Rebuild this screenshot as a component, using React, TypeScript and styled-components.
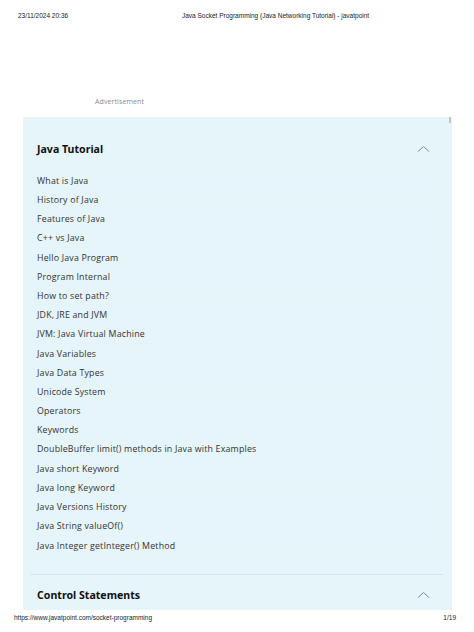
import React from "react";
import styled, { createGlobalStyle } from "styled-components";

const Global = createGlobalStyle`
  html, body { margin: 0; padding: 0; background: #ffffff; }
  body { width: 474px; height: 632px; overflow: hidden; }
`;

const Page = styled.div`
  width: 474px;
  height: 632px;
  display: flex;
  flex-direction: column;
  overflow: hidden;
  font-family: "Liberation Sans", Arial, sans-serif;
`;

const PrintHeader = styled.div`
  height: 30px;
  flex: none;
  display: grid;
  grid-template-columns: 164px auto;
  align-items: center;
  padding-left: 18px;
  font-size: 6.5px;
  color: #222;
`;

const Content = styled.div`
  flex: 1;
  min-height: 0;
  overflow: hidden;
  display: flex;
  flex-direction: column;
`;

const AdArea = styled.div`
  height: 87px;
  flex: none;
  display: flex;
  align-items: flex-end;
  padding: 0 0 10px 95px;
  box-sizing: border-box;
`;

const AdLabel = styled.span`
  font-family: "Open Sans", sans-serif;
  font-size: 7px;
  letter-spacing: 0.1px;
  color: #8a8a8a;
  line-height: 10px;
`;

const Panel = styled.div`
  position: relative;
  margin: 0 22px 0 23px;
  padding-top: 12px;
  background: #e6f5fa;
  flex: 1;
  min-height: 0;
  overflow: hidden;
`;

const ScrollThumb = styled.div`
  position: absolute;
  top: 0;
  right: 1px;
  width: 2px;
  height: 6px;
  background: #b9c4c8;
`;

const Section = styled.div<{ $divided?: boolean }>`
  margin: 0 9px 0 7px;
  border-top: ${(p) => (p.$divided ? "1px solid #d3e5eb" : "none")};
`;

const SectionHeader = styled.div`
  height: 40px;
  display: flex;
  align-items: center;
  justify-content: space-between;
  padding: 0 13px 0 7px;
`;

const SectionTitle = styled.span`
  font-family: "Noto Sans", sans-serif;
  font-weight: 700;
  font-size: 10.6px;
  color: #111;
`;

const List = styled.ul`
  list-style: none;
  margin: 0 19px 0 7px;
  padding: 2px 0 19px 0;
`;

const Item = styled.li`
  height: 19.2px;
  display: flex;
  align-items: center;
  box-sizing: border-box;
  padding-top: 1.5px;
  border-bottom: 1px solid #e2f3f9;
  font-family: "Open Sans", sans-serif;
  font-size: 8.8px;
  letter-spacing: 0.2px;
  color: #333;
  &:last-child { border-bottom: none; }
`;

const PrintFooter = styled.div`
  height: 22px;
  flex: none;
  display: flex;
  justify-content: space-between;
  align-items: flex-start;
  padding: 4px 18px 0 14px;
  box-sizing: border-box;
  font-size: 6.5px;
  color: #222;
`;

const Chevron = () => (
  <svg width="13" height="8" viewBox="0 0 13 8" fill="none">
    <path d="M1 6.5 L6.5 1.5 L12 6.5" stroke="#7d8d93" strokeWidth="1" />
  </svg>
);

const items = [
  "What is Java",
  "History of Java",
  "Features of Java",
  "C++ vs Java",
  "Hello Java Program",
  "Program Internal",
  "How to set path?",
  "JDK, JRE and JVM",
  "JVM: Java Virtual Machine",
  "Java Variables",
  "Java Data Types",
  "Unicode System",
  "Operators",
  "Keywords",
  "DoubleBuffer limit() methods in Java with Examples",
  "Java short Keyword",
  "Java long Keyword",
  "Java Versions History",
  "Java String valueOf()",
  "Java Integer getInteger() Method",
];

export default function App() {
  return (
    <Page>
      <Global />
      <PrintHeader>
        <span>23/11/2024 20:36</span>
        <span>Java Socket Programming (Java Networking Tutorial) - javatpoint</span>
      </PrintHeader>
      <Content>
        <AdArea>
          <AdLabel>Advertisement</AdLabel>
        </AdArea>
        <Panel>
          <ScrollThumb />
          <Section>
            <SectionHeader>
              <SectionTitle>Java Tutorial</SectionTitle>
              <Chevron />
            </SectionHeader>
            <List>
              {items.map((t) => (
                <Item key={t}>{t}</Item>
              ))}
            </List>
          </Section>
          <Section $divided>
            <SectionHeader>
              <SectionTitle>Control Statements</SectionTitle>
              <Chevron />
            </SectionHeader>
          </Section>
        </Panel>
      </Content>
      <PrintFooter>
        <span>https://www.javatpoint.com/socket-programming</span>
        <span>1/19</span>
      </PrintFooter>
    </Page>
  );
}
